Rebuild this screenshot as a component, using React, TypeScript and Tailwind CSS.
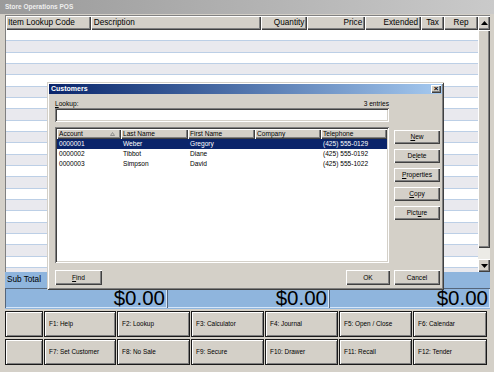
import React from "react";

const raised =
  "shadow-[inset_1px_1px_0_#ffffff,inset_-1px_-1px_0_#404040,inset_-2px_-2px_0_#808080]";
const sunken =
  "shadow-[inset_1px_1px_0_#808080,inset_-1px_-1px_0_#ffffff,inset_2px_2px_0_#404040,inset_-2px_-2px_0_#d4d0c8]";

const gridCols = [
  { label: "Item Lookup Code", w: "w-[85px]", align: "justify-start pl-[2px]" },
  { label: "Description", w: "w-[171px]", align: "justify-start pl-[3px]" },
  { label: "Quantity", w: "w-[46px]", align: "justify-end pr-[3px]" },
  { label: "Price", w: "w-[58px]", align: "justify-end pr-[3px]" },
  { label: "Extended", w: "w-[56px]", align: "justify-end pr-[3px]" },
  { label: "Tax", w: "w-[23px]", align: "justify-center" },
  { label: "Rep", w: "w-[34px]", align: "justify-center" },
];

const listCols = [
  { label: "Account", w: "w-[64px]" },
  { label: "Last Name", w: "w-[67px]" },
  { label: "First Name", w: "w-[67px]" },
  { label: "Company", w: "w-[66px]" },
  { label: "Telephone", w: "w-[66px]" },
];

const customers = [
  ["0000001", "Weber", "Gregory", "", "(425) 555-0129"],
  ["0000002", "Tibbot", "Diane", "", "(425) 555-0192"],
  ["0000003", "Simpson", "David", "", "(425) 555-1022"],
];

const sideButtons: [string, number][] = [
  ["New", 0],
  ["Delete", 2],
  ["Properties", 0],
  ["Copy", 0],
  ["Picture", 4],
];

const fkeys = [
  ["", "F1: Help", "F2: Lookup", "F3: Calculator", "F4: Journal", "F5: Open / Close", "F6: Calendar"],
  ["", "F7: Set Customer", "F8: No Sale", "F9: Secure", "F10: Drawer", "F11: Recall", "F12: Tender"],
];
const fkeyWidths = ["w-[38px]", "w-[72px]", "w-[73px]", "w-[73px]", "w-[73px]", "w-[73px]", "w-[74px]"];

function Mnemonic({ text, at }: { text: string; at: number }) {
  return (
    <span>
      {text.slice(0, at)}
      <span className="underline">{text[at]}</span>
      {text.slice(at + 1)}
    </span>
  );
}

function Arrow({ down }: { down?: boolean }) {
  return (
    <svg width="7" height="4" viewBox="0 0 7 4">
      <polygon points={down ? "0,0 7,0 3.5,4" : "0,4 7,4 3.5,0"} fill="#000" />
    </svg>
  );
}

export default function App() {
  return (
    <div className="relative w-[494px] h-[372px] overflow-hidden bg-[#d4d0c8] font-['Liberation_Sans',Arial,sans-serif] text-black">
      {/* Window title */}
      <div className="h-[14px] flex items-center pl-[5px] bg-gradient-to-r from-[#9a9a9a] to-[#cacaca] text-[6.5px] font-bold text-[#eeeeee]">
        Store Operations POS
      </div>

      {/* Transaction grid */}
      <div className="mt-[1px] ml-[5px] w-[485px] h-[257px] flex bg-white border-l border-t border-[#808080]">
        <div className="w-[472px] flex flex-col overflow-hidden">
          <div className="h-[14px] flex shrink-0 bg-[#d4d0c8]">
            {gridCols.map((c) => (
              <div
                key={c.label}
                className={`${c.w} h-full flex items-center ${c.align} text-[8.2px] ${raised}`}
              >
                {c.label}
              </div>
            ))}
          </div>
          {Array.from({ length: 22 }).map((_, i) => (
            <div
              key={i}
              className={`h-[11.33px] shrink-0 border-b border-[#bccfe6] ${i % 2 ? "bg-[#e9e9ee]" : "bg-white"}`}
            />
          ))}
        </div>
        <div className="w-[12px] flex flex-col bg-[#ecebe6]">
          <div className={`h-[14px] flex items-center justify-center bg-[#d4d0c8] ${raised}`}>
            <Arrow />
          </div>
          <div className={`h-[218px] bg-[#d4d0c8] ${raised}`} />
          <div className="flex-1" />
          <div className={`h-[13px] flex items-center justify-center bg-[#d4d0c8] ${raised}`}>
            <Arrow down />
          </div>
        </div>
      </div>

      {/* Totals */}
      <div className="ml-[5px] w-[485px] h-[37px] flex bg-[#8fb5dd]">
        {["Sub Total", "Sales Tax", "Total"].map((label, i) => (
          <div key={label} className={`${i === 2 ? "w-[161px]" : "w-[162px]"} flex flex-col`}>
            <div className="h-[16px] flex items-center pl-[2px] text-[8.2px]">{label}</div>
            <div className="h-[20px] flex items-center justify-end pr-[2px] text-[20.5px] leading-none shadow-[inset_1px_1px_0_#55657a,inset_-1px_-1px_0_#d6e6f8]">
              $0.00
            </div>
          </div>
        ))}
      </div>

      {/* Function keys */}
      <div className="mt-[2px] ml-[5px] flex flex-col gap-[2px]">
        {fkeys.map((row, r) => (
          <div key={r} className="flex gap-[1px]">
            {row.map((label, c) => (
              <div
                key={c}
                className={`${fkeyWidths[c]} h-[26px] flex items-center pl-[4px] text-[6.4px] bg-[#d4d0c8] border border-[#1a1a1a] shadow-[inset_1px_1px_0_#ffffff,inset_-1px_-1px_0_#808080]`}
              >
                {label}
              </div>
            ))}
          </div>
        ))}
      </div>

      {/* Customers dialog */}
      <div className="absolute left-[47px] top-[82px] w-[397px] h-[208px] p-[2px] flex flex-col bg-[#d4d0c8] shadow-[inset_1px_1px_0_#d4d0c8,inset_-1px_-1px_0_#404040,inset_2px_2px_0_#ffffff,inset_-2px_-2px_0_#808080]">
        <div className="h-[10px] flex items-center justify-between pl-[2px] pr-[1px] bg-gradient-to-r from-[#0a246a] to-[#a6caf0]">
          <span className="text-[7px] font-bold text-white">Customers</span>
          <div className={`w-[10px] h-[8px] flex items-center justify-center bg-[#d4d0c8] text-[8px] font-bold leading-none ${raised}`}>
            ×
          </div>
        </div>

        <div className="pl-[6px] flex flex-col text-[6.6px]">
          <div className="mt-[5px] h-[9px] w-[334px] flex items-center justify-between">
            <Mnemonic text="Lookup:" at={0} />
            <span>3 entries</span>
          </div>
          <div className={`h-[14px] w-[334px] bg-white ${sunken}`} />

          <div className="mt-[5px] flex gap-[5px]">
            <div className={`w-[334px] h-[136px] p-[2px] bg-white ${sunken}`}>
              <div className="h-[10px] flex bg-[#d4d0c8]">
                {listCols.map((c, i) => (
                  <div
                    key={c.label}
                    className={`${c.w} h-full flex items-center justify-between pl-[2px] pr-[6px] ${raised}`}
                  >
                    <span>{c.label}</span>
                    {i === 0 && (
                      <svg width="5" height="4" viewBox="0 0 5 4">
                        <polygon points="0.5,3.5 4.5,3.5 2.5,0.5" fill="none" stroke="#808080" strokeWidth="0.8" />
                      </svg>
                    )}
                  </div>
                ))}
              </div>
              {customers.map((row, r) => (
                <div
                  key={r}
                  className={`h-[10px] flex ${r === 0 ? "bg-[#0a246a] text-white" : "text-black"}`}
                >
                  {row.map((cell, c) => (
                    <div key={c} className={`${listCols[c].w} flex items-center pl-[2px]`}>
                      {cell}
                    </div>
                  ))}
                </div>
              ))}
            </div>

            <div className="mt-[3px] w-[46px] flex flex-col gap-[5px]">
              {sideButtons.map(([t, at]) => (
                <div key={t} className={`h-[14px] flex items-center justify-center ${raised}`}>
                  <Mnemonic text={t} at={at} />
                </div>
              ))}
            </div>
          </div>

          <div className="mt-[7px] h-[15px] w-[385px] flex">
            <div className={`w-[47px] flex items-center justify-center ${raised}`}>
              <Mnemonic text="Find" at={0} />
            </div>
            <div className="flex-1" />
            <div className={`w-[44px] flex items-center justify-center ${raised}`}>OK</div>
            <div className={`ml-[4px] w-[46px] flex items-center justify-center ${raised}`}>Cancel</div>
          </div>
        </div>
      </div>
    </div>
  );
}
